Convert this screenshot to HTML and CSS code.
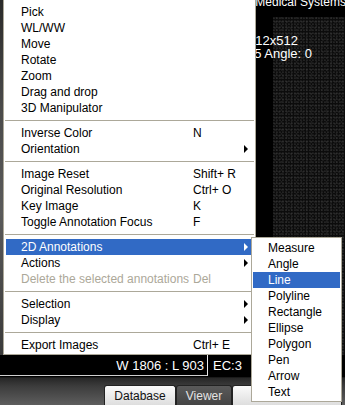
FILE: index.html
```html
<!DOCTYPE html>
<html>
<head>
<meta charset="utf-8">
<link rel="stylesheet" href="styles.css">
</head>
<body>
<div class="screen">
  <div class="viewport">
    <div class="image">
      <div class="strip"></div>
      <div class="dark"></div>
      <div class="noise"></div>
      <div class="ov ov-top">GE Healthcare Medical Systems</div>
      <div class="ov ov-l1">Image size: 512x512</div>
      <div class="ov ov-l2">Zoom: 0.75 Angle: 0</div>
    </div>
    <div class="status">
      <div class="wl">W 1806 : L 903</div>
      <div class="ec">EC:3</div>
    </div>
    <div class="toolbar">
      <div class="tab tab-light">Database</div>
      <div class="tab tab-dark">Viewer</div>
      <div class="tab tab-light tab-wide"></div>
    </div>
  </div>

  <div class="menu main-menu">
    <div class="item"><span>Pick</span></div>
    <div class="item"><span>WL/WW</span></div>
    <div class="item"><span>Move</span></div>
    <div class="item"><span>Rotate</span></div>
    <div class="item"><span>Zoom</span></div>
    <div class="item"><span>Drag and drop</span></div>
    <div class="item"><span>3D Manipulator</span></div>
    <div class="sep"></div>
    <div class="item"><span>Inverse Color</span><span>N</span></div>
    <div class="item"><span>Orientation</span><span></span><i class="arrow"></i></div>
    <div class="sep"></div>
    <div class="item"><span>Image Reset</span><span>Shift+ R</span></div>
    <div class="item"><span>Original Resolution</span><span>Ctrl+ O</span></div>
    <div class="item"><span>Key Image</span><span>K</span></div>
    <div class="item"><span>Toggle Annotation Focus</span><span>F</span></div>
    <div class="sep"></div>
    <div class="item active"><span>2D Annotations</span><span></span><i class="arrow"></i></div>
    <div class="item"><span>Actions</span><span></span><i class="arrow"></i></div>
    <div class="item disabled"><span>Delete the selected annotations</span><span>Del</span></div>
    <div class="sep"></div>
    <div class="item"><span>Selection</span><span></span><i class="arrow"></i></div>
    <div class="item"><span>Display</span><span></span><i class="arrow"></i></div>
    <div class="sep"></div>
    <div class="item"><span>Export Images</span><span>Ctrl+ E</span></div>
  </div>

  <div class="menu sub-menu">
    <div class="sitem">Measure</div>
    <div class="sitem">Angle</div>
    <div class="sitem active">Line</div>
    <div class="sitem">Polyline</div>
    <div class="sitem">Rectangle</div>
    <div class="sitem">Ellipse</div>
    <div class="sitem">Polygon</div>
    <div class="sitem">Pen</div>
    <div class="sitem">Arrow</div>
    <div class="sitem">Text</div>
  </div>
</div>
</body>
</html>
```

FILE: styles.css
```css
* { box-sizing: border-box; }
html, body {
  margin: 0;
  padding: 0;
  background: #000;
}
body {
  font-family: "Liberation Sans", Arial, sans-serif;
  font-size: 12px;
  color: #000;
}
.screen {
  position: relative;
  width: 345px;
  height: 405px;
  overflow: hidden;
  background: #000;
}
.viewport {
  display: flex;
  flex-direction: column;
  width: 345px;
  height: 405px;
}
.image {
  position: relative;
  height: 355px;
  display: flex;
  background: #000;
}
.strip {
  width: 3px;
  background: linear-gradient(#2a2a2a, #4a4a4a 30%, #5a5a5a 60%, #3a3a3a);
}
.dark {
  flex: 1;
  background: #000;
}
.noise {
  width: 72px;
  margin-top: 17px;
  background-color: #0c0c0c;
  background-image:
    radial-gradient(circle at 30% 40%, rgba(60,60,60,0.5) 0.6px, transparent 1.2px),
    radial-gradient(circle at 70% 20%, rgba(45,45,45,0.6) 0.6px, transparent 1.2px),
    radial-gradient(circle at 50% 80%, rgba(35,35,35,0.7) 0.8px, transparent 1.4px);
  background-size: 3px 3px, 5px 4px, 4px 6px;
}
.ov {
  position: absolute;
  color: #fff;
  white-space: nowrap;
  line-height: 13px;
}
.ov-top {
  top: -4px;
  right: -1px;
  font-size: 12px;
}
.ov-l1 {
  top: 34px;
  right: 47px;
  font-size: 13px;
}
.ov-l2 {
  top: 47px;
  right: 33px;
  font-size: 13px;
}
.status {
  height: 22px;
  display: flex;
  align-items: stretch;
  background: #000;
  color: #fff;
  font-size: 13px;
}
.wl {
  width: 208px;
  text-align: right;
  padding-right: 3px;
  padding-top: 3px;
  border-right: 1px solid #e8e8e8;
  border-bottom: 1px solid #d0d0d0;
  margin-bottom: 1px;
}
.ec {
  padding-left: 5px;
  padding-top: 3px;
}
.toolbar {
  flex: 1;
  display: flex;
  align-items: flex-end;
  padding-left: 104px;
  background: linear-gradient(#262626, #3c3c3c 30%, #5e5e5e);
  border-top: 1px solid #1a1a1a;
}
.tab {
  height: 20px;
  border: 1px solid #222;
  border-bottom: none;
  border-radius: 3px 3px 0 0;
  text-align: center;
  line-height: 20px;
  font-size: 12px;
}
.tab-light {
  width: 72px;
  background: linear-gradient(#fafafa, #dedede);
  color: #111;
}
.tab-dark {
  width: 56px;
  background: linear-gradient(#5a5a5a, #444);
  color: #e4e4e4;
}
.tab-wide {
  width: 110px;
}
.menu {
  position: absolute;
  background: #fff;
  border: 1px solid #aca899;
}
.main-menu {
  left: 3px;
  top: -1px;
  width: 253px;
  padding: 4px 2px 1px 2px;
}
.item {
  display: grid;
  grid-template-columns: 172px 1fr 10px;
  align-items: center;
  height: 16px;
  line-height: 16px;
  padding-left: 15px;
  white-space: nowrap;
}
.item.active {
  background: #316ac5;
  color: #fff;
}
.item.disabled {
  color: #aca899;
}
.arrow {
  display: block;
  width: 0;
  height: 0;
  margin-left: 1px;
  border-left: 4px solid #000;
  border-top: 4px solid transparent;
  border-bottom: 4px solid transparent;
}
.item.active .arrow {
  border-left-color: #fff;
}
.sep {
  height: 9px;
  padding-top: 4px;
  margin: 0 -1px;
}
.sep::before {
  content: "";
  display: block;
  height: 1px;
  background: #aca899;
}
.sub-menu {
  left: 251px;
  top: 237px;
  width: 91px;
  padding: 2px 1px 1px 1px;
}
.sitem {
  height: 16px;
  line-height: 16px;
  padding-left: 15px;
  white-space: nowrap;
}
.sitem.active {
  background: #316ac5;
  color: #fff;
}
```
